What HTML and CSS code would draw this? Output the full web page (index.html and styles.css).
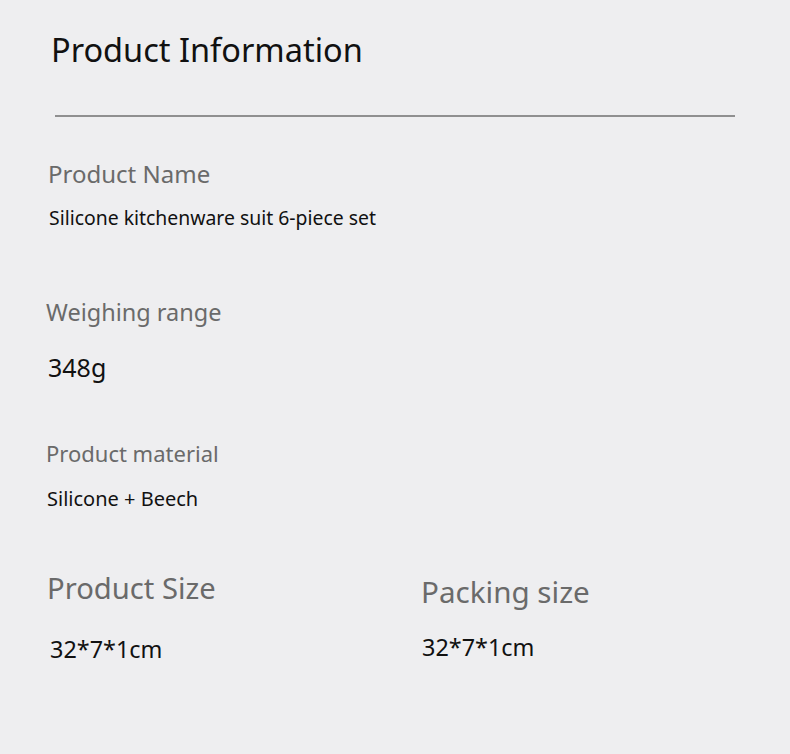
FILE: index.html
```html
<!DOCTYPE html>
<html>
<head>
<meta charset="utf-8">
<link rel="stylesheet" href="styles.css">
</head>
<body>
<main class="page">
  <h1 class="title">Product Information</h1>
  <div class="rule"></div>

  <section class="field f-name">
    <div class="label">Product Name</div>
    <div class="value">Silicone kitchenware suit 6-piece set</div>
  </section>

  <section class="field f-weight">
    <div class="label">Weighing range</div>
    <div class="value">348g</div>
  </section>

  <section class="field f-material">
    <div class="label">Product material</div>
    <div class="value">Silicone + Beech</div>
  </section>

  <div class="sizes">
    <section class="field f-psize">
      <div class="label">Product Size</div>
      <div class="value">32*7*1cm</div>
    </section>
    <section class="field f-pack">
      <div class="label">Packing size</div>
      <div class="value">32*7*1cm</div>
    </section>
  </div>
</main>
</body>
</html>
```

FILE: styles.css
```css
html, body {
  margin: 0;
  padding: 0;
  background: #eeeef0;
}
body {
  font-family: "Noto Sans", "Open Sans", sans-serif;
  width: 790px;
  height: 754px;
  overflow: hidden;
}
.page {
  padding-top: 34px;
}
.title {
  margin: 0 0 0 51px;
  font-size: 32.5px;
  font-weight: 400;
  color: #111;
  line-height: 1;
}
.rule {
  margin: 48.5px 0 0 55px;
  width: 680px;
  height: 2px;
  background: #8f8f90;
}
.field {
  display: flex;
  flex-direction: column;
  align-items: flex-start;
}
.label {
  color: #6a6a6a;
  line-height: 1;
}
.value {
  color: #111;
  line-height: 1;
}

.f-name { margin: 44.7px 0 0 48px; }
.f-name .label { font-size: 24px; }
.f-name .value { font-size: 19.4px; margin: 22.1px 0 0 1px; }

.f-weight { margin: 73.9px 0 0 46px; }
.f-weight .label { font-size: 23.5px; }
.f-weight .value { font-size: 25px; margin: 30.2px 0 0 2px; }

.f-material { margin: 62.7px 0 0 46px; }
.f-material .label { font-size: 22px; }
.f-material .value { font-size: 20px; margin: 24.7px 0 0 1px; }

.sizes {
  display: grid;
  grid-template-columns: 374px 1fr;
  align-items: start;
  margin: 64.9px 0 0 47px;
}
.f-psize .label { font-size: 29.2px; }
.f-psize .value { font-size: 23.4px; margin: 34.9px 0 0 3px; }
.f-pack { margin-top: 2.6px; }
.f-pack .label { font-size: 29.6px; }
.f-pack .value { font-size: 23.4px; margin: 29.9px 0 0 1px; }
```
